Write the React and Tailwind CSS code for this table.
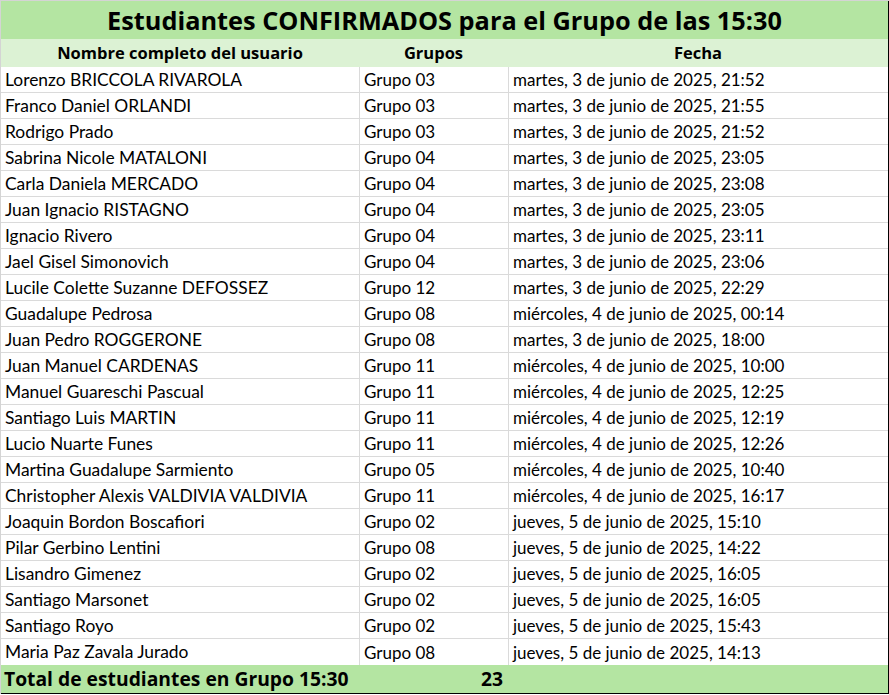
import React from "react";

const rows = [
  ["Lorenzo BRICCOLA RIVAROLA", "Grupo 03", "martes, 3 de junio de 2025, 21:52"],
  ["Franco Daniel ORLANDI", "Grupo 03", "martes, 3 de junio de 2025, 21:55"],
  ["Rodrigo Prado", "Grupo 03", "martes, 3 de junio de 2025, 21:52"],
  ["Sabrina Nicole MATALONI", "Grupo 04", "martes, 3 de junio de 2025, 23:05"],
  ["Carla Daniela MERCADO", "Grupo 04", "martes, 3 de junio de 2025, 23:08"],
  ["Juan Ignacio RISTAGNO", "Grupo 04", "martes, 3 de junio de 2025, 23:05"],
  ["Ignacio Rivero", "Grupo 04", "martes, 3 de junio de 2025, 23:11"],
  ["Jael Gisel Simonovich", "Grupo 04", "martes, 3 de junio de 2025, 23:06"],
  ["Lucile Colette Suzanne DEFOSSEZ", "Grupo 12", "martes, 3 de junio de 2025, 22:29"],
  ["Guadalupe Pedrosa", "Grupo 08", "miércoles, 4 de junio de 2025, 00:14"],
  ["Juan Pedro ROGGERONE", "Grupo 08", "martes, 3 de junio de 2025, 18:00"],
  ["Juan Manuel CARDENAS", "Grupo 11", "miércoles, 4 de junio de 2025, 10:00"],
  ["Manuel Guareschi Pascual", "Grupo 11", "miércoles, 4 de junio de 2025, 12:25"],
  ["Santiago Luis MARTIN", "Grupo 11", "miércoles, 4 de junio de 2025, 12:19"],
  ["Lucio Nuarte Funes", "Grupo 11", "miércoles, 4 de junio de 2025, 12:26"],
  ["Martina Guadalupe Sarmiento", "Grupo 05", "miércoles, 4 de junio de 2025, 10:40"],
  ["Christopher Alexis VALDIVIA VALDIVIA", "Grupo 11", "miércoles, 4 de junio de 2025, 16:17"],
  ["Joaquin Bordon Boscafiori", "Grupo 02", "jueves, 5 de junio de 2025, 15:10"],
  ["Pilar Gerbino Lentini", "Grupo 08", "jueves, 5 de junio de 2025, 14:22"],
  ["Lisandro Gimenez", "Grupo 02", "jueves, 5 de junio de 2025, 16:05"],
  ["Santiago Marsonet", "Grupo 02", "jueves, 5 de junio de 2025, 16:05"],
  ["Santiago Royo", "Grupo 02", "jueves, 5 de junio de 2025, 15:43"],
  ["Maria Paz Zavala Jurado", "Grupo 08", "jueves, 5 de junio de 2025, 14:13"],
];

const boldFont = { fontFamily: "'Open Sans', 'Liberation Sans', sans-serif" };

export default function App() {
  return (
    <div
      className="w-[889px] h-[695px] bg-white text-black"
      style={{ fontFamily: "Lato, 'Liberation Sans', sans-serif" }}
    >
      <div className="w-[889px] border-t border-l border-[#d4d4d4]">
        <div className="border-r border-black">
          <div className="h-[38px] bg-[#b4e5a2] flex items-center justify-center" style={boldFont}>
            <span className="text-[25.3px] font-bold leading-none pt-[1px]">
              Estudiantes CONFIRMADOS para el Grupo de las 15:30
            </span>
          </div>
          <div
            className="h-[28px] bg-[#dcf2d4] grid grid-cols-[358px_149px_380px] items-center text-[16.5px] font-bold leading-none"
            style={boldFont}
          >
            <div className="text-center pt-[1px]">Nombre completo del usuario</div>
            <div className="text-center pt-[1px]">Grupos</div>
            <div className="text-center pt-[1px]">Fecha</div>
          </div>
          {rows.map((r, i) => (
            <div
              key={i}
              className={`grid grid-cols-[358px_149px_380px] h-[26px] text-[17px] leading-none ${
                i < rows.length - 1 ? "border-b border-[#dadada]" : ""
              }`}
            >
              <div className="pl-[4px] flex items-center whitespace-nowrap text-[17.4px]">
                {r[0]}
              </div>
              <div className="pl-[4px] flex items-center border-l border-[#dadada]">
                {r[1]}
              </div>
              <div className="pl-[4px] flex items-center border-l border-[#dadada] whitespace-nowrap">
                {r[2]}
              </div>
            </div>
          ))}
          <div
            className="h-[29px] bg-[#b4e5a2] grid grid-cols-[358px_149px_380px] items-center text-[19.3px] font-bold leading-none border-b border-black"
            style={boldFont}
          >
            <div className="pl-[3px] whitespace-nowrap">Total de estudiantes en Grupo 15:30</div>
            <div className="text-right pr-[5px]">23</div>
            <div></div>
          </div>
        </div>
      </div>
    </div>
  );
}
